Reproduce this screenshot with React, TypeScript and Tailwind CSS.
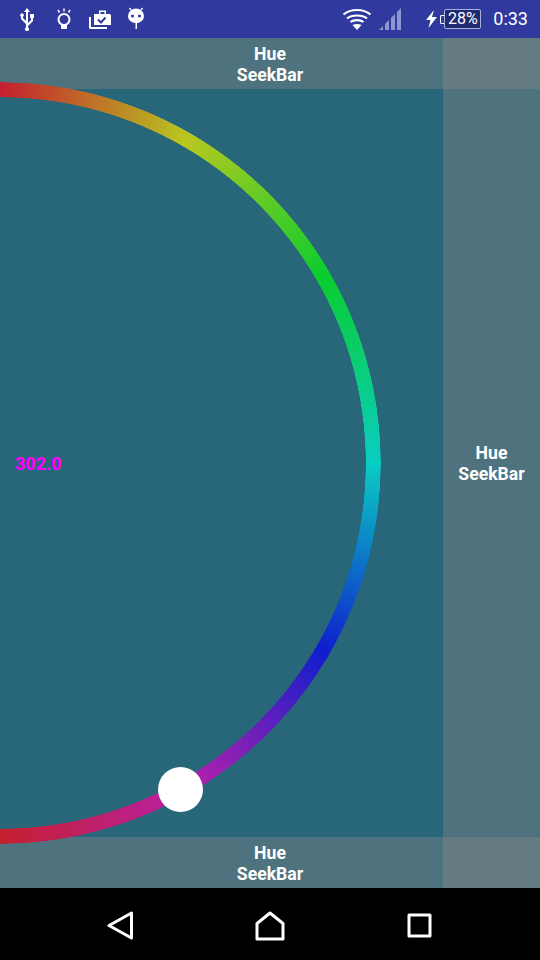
const Bar = () => (
  <div className="h-[51px] bg-[rgba(135,135,135,0.4)] pt-[2px] flex flex-col items-center justify-center text-white text-[17.6px] leading-[21px] font-bold">
    <span>Hue</span>
    <span>SeekBar</span>
  </div>
);

const StatusBar = () => (
  <div className="h-[38px] bg-[#303a9e] flex items-center justify-between text-white pl-[18px] pr-[12px]">
    <div className="flex items-center">
      <svg width="18" height="24" viewBox="0 0 18 24" fill="white">
        <path d="M9 1l3 4h-2v11l3-3v-2h-1V7h4v4h-1v3l-5 5v1.500a2 2 0 1 1-2 0V17l-5-5V9.700a1.800 1.800 0 1 1 2 0V11l3 3V5H6z" />
      </svg>
      <svg width="18" height="24" viewBox="0 0 18 24" fill="none" stroke="white" className="ml-[19px]">
        <circle cx="9" cy="12.500" r="5.500" strokeWidth="2" />
        <path d="M6.500 18h5v3.500h-5z" fill="white" strokeWidth="1" />
        <path d="M9 1.500v3M3 3l1.500 2.500M15 3l-1.500 2.500" strokeWidth="1.500" />
      </svg>
      <svg width="24" height="24" viewBox="0 0 24 24" fill="white" className="ml-[14px]">
        <path d="M7 7h15.500A1.500 1.500 0 0 1 24 8.500V18H7zM12 3.500h7v3.500h-1.500V5h-4v2H12z" />
        <path d="M2 10h2v10h16v2H3.500A1.500 1.500 0 0 1 2 20.500z" />
        <path d="M11 12.500l3 3 4.500-5" fill="none" stroke="#303a9e" strokeWidth="2" />
      </svg>
      <svg width="18" height="24" viewBox="0 0 18 24" fill="white" className="ml-[16px]">
        <path d="M1 9a8 7.500 0 0 1 16 0c0 3.800-3 6.500-7 7v6H8.500v-6C4 15.500 1 12.800 1 9z" />
        <path d="M4 3L2.500 1M14 3l1.500-2" stroke="white" strokeWidth="1.300" />
        <circle cx="5.500" cy="9" r="1.500" fill="#303a9e" />
        <circle cx="12.500" cy="9" r="1.500" fill="#303a9e" />
      </svg>
    </div>
    <div className="flex items-center">
      <svg width="30" height="24" viewBox="0 0 30 24" fill="none" stroke="white" strokeWidth="2.200" className="mr-[7px]">
        <path d="M1.500 7.500c7-6 20-6 27 0M5 11.500c5-4 15-4 20 0M8.500 15c3-2.500 10-2.500 13 0" />
        <path d="M15 23l-4.500-5c2.500-1.500 6.500-1.500 9 0z" fill="white" stroke="none" />
      </svg>
      <svg width="24" height="24" viewBox="0 0 24 24" fill="#8f96cf" className="mr-[22px]">
        <path d="M0 23l4-4v4zM6 23v-6l4-4v10zM12 23V11l4-4v16zM18 23V5l4-4v22z" />
      </svg>
      <svg width="13" height="20" viewBox="0 0 13 20" fill="white" className="mr-[6px]">
        <path d="M9 1L1 11h4.500L3.500 19 12 8H7z" />
      </svg>
      <div className="relative w-[37px] h-[20px] border border-[#aab0dc] rounded-[2px] bg-[#1f2a70] flex items-center justify-center text-[16px] leading-none">
        <div className="absolute left-[-5px] top-[5px] w-[4px] h-[9px] border border-r-0 border-white rounded-l-[2px]" />
        28%
      </div>
      <span className="ml-[12px] text-[18px] leading-none">0:33</span>
    </div>
  </div>
);

const NavBar = () => (
  <div className="h-[72px] bg-black flex items-center pl-[107px] pt-[3px]">
    <svg width="27" height="29" viewBox="0 0 27 29" fill="none" stroke="white" strokeWidth="3" strokeLinejoin="round">
      <path d="M24.500 2v25L2 14.500z" />
    </svg>
    <svg width="30" height="30" viewBox="0 0 30 30" fill="none" stroke="white" strokeWidth="3" strokeLinejoin="round" className="ml-[121px]">
      <path d="M2 12.500L15 2l13 10.500v15.500H2z" />
    </svg>
    <svg width="25" height="25" viewBox="0 0 25 25" fill="none" stroke="white" strokeWidth="3" strokeLinejoin="round" className="ml-[122px]">
      <path d="M2 2h21v21H2z" />
    </svg>
  </div>
);

export default function App() {
  return (
    <div className="w-[540px] h-[960px] overflow-hidden flex flex-col font-['Roboto',sans-serif]">
      <StatusBar />
      <div className="relative h-[850px] bg-[#28667a] overflow-hidden flex flex-col justify-between">
        <Bar />
        <Bar />
        <div className="absolute right-0 top-0 bottom-0 w-[97px] pt-[1px] bg-[rgba(135,135,135,0.4)] flex flex-col items-center justify-center text-white text-[17.6px] leading-[21px] font-bold">
          <span>Hue</span>
          <span>SeekBar</span>
        </div>
        {/* sweep gradient ring, centred on the left edge, sits above the bars */}
        <div className="absolute left-[-381px] top-[44px] w-[762px] h-[762px] rounded-full bg-[conic-gradient(#c4202e,#b8c820_30deg,#0acd2d_60deg,#0acdc3_90deg,#0f1ecd_120deg,#b920aa_150deg,#c4202e_180deg)] [mask-image:radial-gradient(circle,transparent_365.500px,black_366px,black_380.500px,transparent_381px)]" />
        <div className="absolute left-[158px] top-[729px] w-[45px] h-[45px] rounded-full bg-white" />
        <div className="absolute left-[15px] top-[415px] text-[18px] leading-[22px] font-bold text-[#ff00ff]">302.0</div>
      </div>
      <NavBar />
    </div>
  );
}
